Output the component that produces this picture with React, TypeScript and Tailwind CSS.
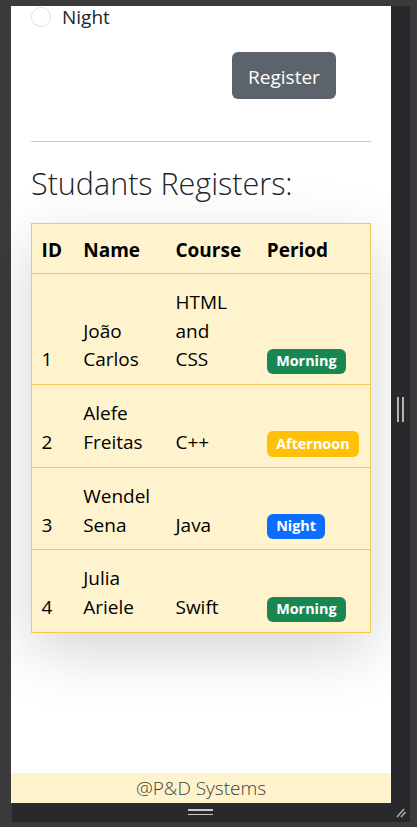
import React from "react";

const rows = [
  { id: "1", name: "João Carlos", course: "HTML and CSS", period: "Morning", color: "bg-[#198754]" },
  { id: "2", name: "Alefe Freitas", course: "C++", period: "Afternoon", color: "bg-[#ffc107]" },
  { id: "3", name: "Wendel Sena", course: "Java", period: "Night", color: "bg-[#0d6efd]" },
  { id: "4", name: "Julia Ariele", course: "Swift", period: "Morning", color: "bg-[#198754]" },
];

export default function App() {
  return (
    <div
      className="w-[417px] h-[827px] bg-[#3b3b3b] overflow-hidden flex flex-col"
      style={{ fontFamily: '"Open Sans", "Noto Sans", sans-serif' }}
    >
      <div className="h-[6px] shrink-0" />
      <div className="flex h-[797px] shrink-0">
        <div className="w-[11px] shrink-0" />
        <div className="w-[380px] h-full bg-white flex flex-col text-[#212529] text-[19px] leading-[28.8px]">
          <div className="px-[20px] flex flex-col">
            <div className="flex items-center h-[22px]">
              <span className="w-[20px] h-[20px] rounded-full border border-[#dee2e6] bg-white shrink-0" />
              <span className="ml-[11px] leading-[26px]">Night</span>
            </div>
            <div className="mt-[24px] pl-[201px]">
              <button className="w-[104px] h-[47px] pt-[3px] rounded-[6px] bg-[#5c636a] text-white text-[19px] flex items-center justify-center">
                Register
              </button>
            </div>
            <div className="mt-[42px] h-px bg-[#c8c9ca]" />
            <h3 className="mt-[21px] text-[30.5px] leading-[40px] font-light text-[#212529]">
              Studants Registers:
            </h3>
            <div className="mt-[20px] shadow-[0_18px_56px_rgba(0,0,0,0.17)]">
              <table className="w-full table-fixed border-collapse border border-[#f3c94f] bg-[#fff3cd] text-black">
                <colgroup>
                  <col className="w-[42px]" />
                  <col className="w-[92px]" />
                  <col className="w-[91px]" />
                  <col className="w-[113px]" />
                </colgroup>
                <thead>
                  <tr className="border-b border-[#f3c94f]">
                    {["ID", "Name", "Course", "Period"].map((h) => (
                      <th key={h} className="text-left font-bold px-[9.6px] pt-[12px] pb-[8px] align-bottom">
                        {h}
                      </th>
                    ))}
                  </tr>
                </thead>
                <tbody>
                  {rows.map((r) => (
                    <tr key={r.id} className="border-b border-[#f3c94f]">
                      <td className="px-[9.6px] pt-[14px] pb-[10px] align-bottom">{r.id}</td>
                      <td className="px-[9.6px] pt-[14px] pb-[10px] align-bottom">{r.name}</td>
                      <td className="px-[9.6px] pt-[14px] pb-[10px] align-bottom">
                        <div className="w-[58px]">{r.course}</div>
                      </td>
                      <td className="px-[9.6px] pt-[14px] pb-[10px] align-bottom">
                        <span
                          className={`inline-block ${r.color} text-white font-bold text-[14.4px] leading-none px-[9.4px] py-[5.5px] rounded-[6px]`}
                        >
                          {r.period}
                        </span>
                      </td>
                    </tr>
                  ))}
                </tbody>
              </table>
            </div>
          </div>
          <div className="mt-auto h-[30px] bg-[#fff3cd] flex items-center justify-center text-[19px] font-light text-[#3d3d3d]">
            @P&amp;D Systems
          </div>
        </div>
        <div className="w-[19px] shrink-0 bg-[#28292c] flex items-center justify-center">
          <div className="flex gap-[3px] translate-y-[5px]">
            <div className="w-[2px] h-[25px] bg-[#b4b4b4]" />
            <div className="w-[2px] h-[25px] bg-[#b4b4b4]" />
          </div>
        </div>
      </div>
      <div className="flex h-[19px] shrink-0">
        <div className="w-[12px] shrink-0" />
        <div className="w-[398px] bg-[#28292c] relative flex justify-center">
          <div className="ml-[-22px] mt-[6px] flex flex-col gap-[3px]">
            <div className="w-[25px] h-[1.5px] bg-[#c8c8c8]" />
            <div className="w-[25px] h-[1.5px] bg-[#c8c8c8]" />
          </div>
          <svg className="absolute left-[384px] top-[4px]" width="10" height="11" viewBox="0 0 10 11">
            <line x1="1" y1="10" x2="8" y2="2" stroke="#b0b0b0" strokeWidth="1.5" />
            <line x1="5" y1="10" x2="9.5" y2="5" stroke="#b0b0b0" strokeWidth="1.5" />
          </svg>
        </div>
      </div>
    </div>
  );
}
